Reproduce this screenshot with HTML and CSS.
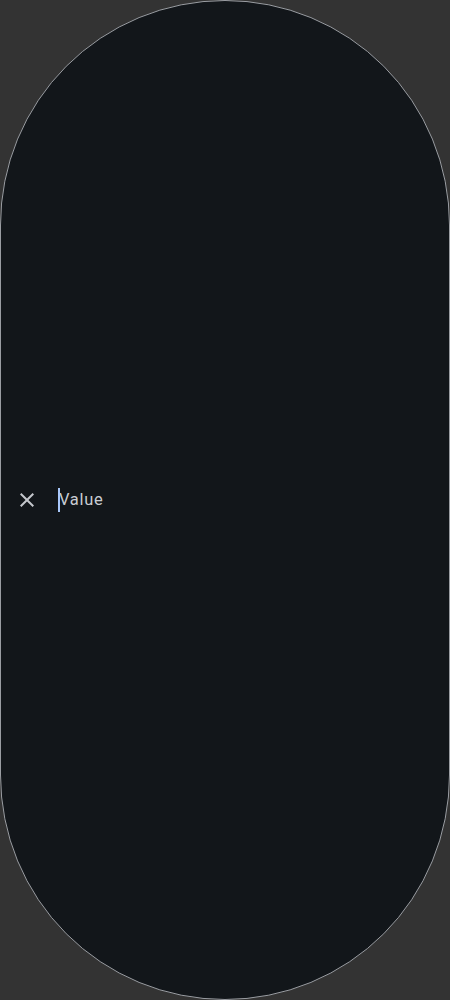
FILE: index.html
```html
<!DOCTYPE html>
<html>
<head>
<meta charset="utf-8">
<link rel="stylesheet" href="styles.css">
</head>
<body>
<div class="field">
  <span class="icon">
    <svg width="24" height="24" viewBox="0 0 24 24"><path d="M19 6.41L17.59 5 12 10.59 6.41 5 5 6.41 10.59 12 5 17.59 6.41 19 12 13.41 17.59 19 19 17.59 13.41 12z" fill="currentColor"/></svg>
  </span>
  <span class="value"><span class="caret"></span>Value</span>
</div>
</body>
</html>
```
FILE: styles.css
```css
html, body {
  margin: 0;
  padding: 0;
  background: #333333;
}
.field {
  box-sizing: border-box;
  width: 450px;
  height: 1000px;
  border: 1px solid #9a9da2;
  border-radius: 9999px;
  background: #12161a;
  display: flex;
  align-items: center;
  padding-left: 14px;
  gap: 20px;
}
.icon {
  width: 24px;
  height: 24px;
  color: #c4c7cc;
  display: flex;
}
.value {
  position: relative;
  font-family: Roboto, sans-serif;
  font-size: 16.5px;
  letter-spacing: 0.7px;
  line-height: 24px;
  color: #c8ccd2;
}
.caret {
  position: absolute;
  left: -1px;
  top: 0;
  width: 2px;
  height: 24px;
  background: #a8c7fa;
}
```
